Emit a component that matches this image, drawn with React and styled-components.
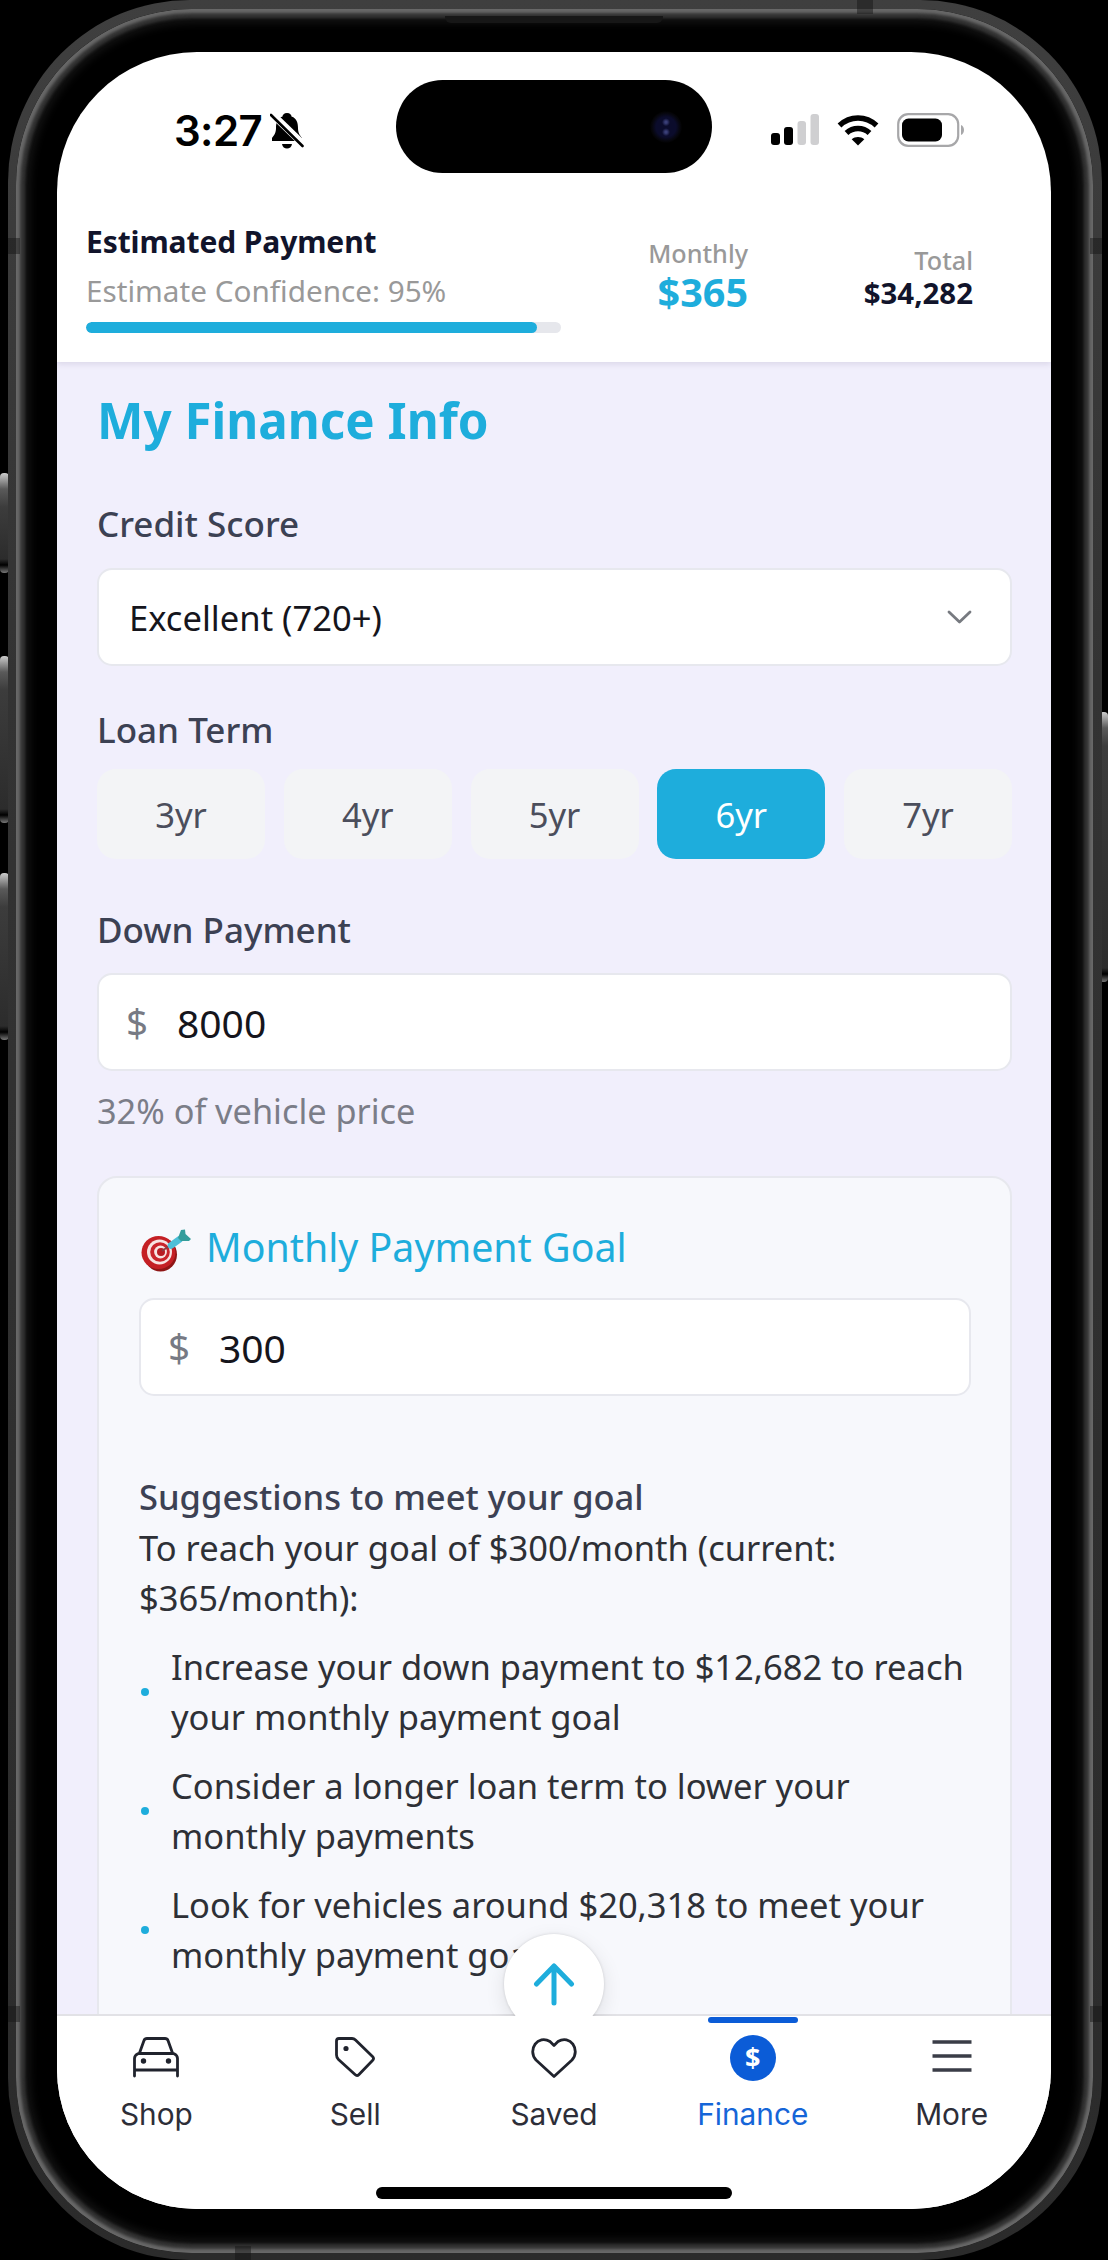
import React from "react";
import styled, { createGlobalStyle, css } from "styled-components";

const Global = createGlobalStyle`
  * { box-sizing: border-box; }
  body { margin: 0; background: #000; }
  h1, h2, h3, p, ul { margin: 0; padding: 0; font-weight: inherit; font-size: inherit; }
  button, input { font: inherit; border: 0; padding: 0; margin: 0; background: none; color: inherit; }
`;

const Stage = styled.main`
  position: relative;
  width: 1108px;
  height: 2260px;
  padding: 0 6px 0 8px;
  background: #000;
  overflow: hidden;
  font-family: "Noto Sans", sans-serif;
`;

const SideButton = styled.i`
  position: absolute;
  ${(p) => (p.$right ? "right: 0;" : "left: 0;")}
  top: ${(p) => p.$top}px;
  width: 9px;
  height: ${(p) => p.$height}px;
  border-radius: 4px;
  background: linear-gradient(#ccc 0, #5a5a5a 16px, #3c3c3c 34px, #2c2c2c calc(100% - 14px), #000 calc(100% - 8px), #777 100%);
`;

const Frame = styled.div`
  position: relative;
  height: 2260px;
  padding: 9px 9px 7px 8px;
  border-radius: 182px;
  background: linear-gradient(#3f3f3f, #333 30%, #2b2b2b);
`;

const Rim = styled.div`
  height: 2244px;
  padding: 43px 42px 43px 41px;
  border-radius: 176px;
  background: #000;
  box-shadow: inset 0 0 3px 4px #686868, inset 0 0 3px 9px #333, inset 0 0 8px 14px #141414;
`;

const Earpiece = styled.i`
  position: absolute;
  top: 16px;
  left: 437px;
  width: 218px;
  height: 7px;
  border-radius: 0 0 6px 6px;
  background: #171717;
`;

const AntennaBand = styled.i`
  position: absolute;
  background: rgba(20, 20, 20, 0.45);
  ${(p) => p.$edge}: 0;
  ${(p) => (p.$edge === "left" || p.$edge === "right"
    ? css`top: ${p.$at}px; width: 12px; height: 16px;`
    : css`left: ${p.$at}px; width: 16px; height: 14px;`)}
`;

const Screen = styled.div`
  height: 2157px;
  border-radius: 140px;
  overflow: hidden;
  display: flex;
  flex-direction: column;
  background: #fff;
`;

const StatusBar = styled.div`
  height: 160px;
  flex: none;
  display: flex;
  align-items: flex-start;
  padding: 28px 86px 0 117px;
`;

const Clock = styled.div`
  width: 222px;
  flex: none;
  display: flex;
  align-items: center;
  gap: 8px;
  padding-top: 27px;
  font: 600 42px/48px Inter, sans-serif;
  letter-spacing: -0.6px;
  color: #000;
`;

const Island = styled.div`
  width: 316px;
  height: 93px;
  border-radius: 47px;
  background: #000;
  display: flex;
  align-items: center;
  justify-content: flex-end;
  padding-right: 30px;
`;

const Lens = styled.i`
  width: 32px;
  height: 32px;
  border-radius: 50%;
  background: radial-gradient(circle at 50% 35%, #3a3f78 0 1px, transparent 4px),
    radial-gradient(circle at 50% 66%, #3a3f78 0 1px, transparent 4px),
    radial-gradient(circle, #0b0c2c 0 10px, #06060c 14px, #020202 16px);
`;

const Signals = styled.div`
  margin-left: auto;
  display: flex;
  align-items: center;
  gap: 18px;
  padding-top: 33px;
  svg { display: block; }
`;

const Summary = styled.header`
  height: 150px;
  flex: none;
  display: flex;
  padding: 12px 78px 0 29px;
  background: #fff;
  box-shadow: 0 2px 6px rgba(60, 50, 90, 0.13);
  clip-path: inset(0 0 -12px 0);
  position: relative;
`;

const Estimate = styled.div`
  width: 475px;
`;

const EstimateTitle = styled.h2`
  font-size: 30px;
  line-height: 36px;
  font-weight: 700;
  letter-spacing: -0.1px;
  color: #11142b;
`;

const Confidence = styled.p`
  margin-top: 13px;
  font-size: 29.7px;
  line-height: 36px;
  color: #999;
`;

const Track = styled.div`
  margin-top: 13px;
  height: 11px;
  border-radius: 6px;
  background: #e6e7ec;
  overflow: hidden;
`;

const Fill = styled.div`
  width: ${(p) => p.$percent}%;
  height: 100%;
  border-radius: 6px;
  background: #1eaddc;
`;

const Figure = styled.div`
  width: ${(p) => p.$width}px;
  padding-top: ${(p) => p.$top}px;
  display: flex;
  flex-direction: column;
  align-items: flex-end;
`;

const FigureLabel = styled.span`
  font-size: 25.2px;
  line-height: 32px;
  font-weight: 500;
  color: #999;
`;

const FigureValue = styled.span`
  font-weight: 700;
  ${(p) => p.$accent
    ? css`font-size: 39.500px; line-height: 46px; color: #1eaddc;`
    : css`font-size: 29.400px; line-height: 34px; color: #11142b;`}
`;

const Content = styled.section`
  flex: 1;
  min-height: 0;
  overflow: hidden;
  display: flex;
  flex-direction: column;
  padding: 26px 39px 0 40px;
  background: #f1effc;
`;

const PageTitle = styled.h1`
  font-size: 49.3px;
  line-height: 64px;
  font-weight: 700;
  color: #1eaddc;
`;

const Label = styled.h3`
  margin-top: ${(p) => p.$top}px;
  font-size: ${(p) => p.$size || 35}px;
  line-height: 44px;
  font-weight: 500;
  color: #3c4153;
`;

const Box = styled.div`
  margin-top: ${(p) => p.$top}px;
  height: 98px;
  flex: none;
  display: flex;
  align-items: center;
  justify-content: space-between;
  padding: 0 38px 0 ${(p) => p.$inset || 30}px;
  border: 2px solid #e7e8ee;
  border-radius: 15px;
  background: #fff;
  font-size: 34.6px;
  color: #15151c;
`;

const Prefix = styled.span`
  width: 51px;
  font-size: 38.5px;
  color: #777a84;
`;

const MoneyInput = styled.input`
  flex: 1;
  min-width: 0;
  font-size: 39px;
  outline: 0;
`;

const Terms = styled.div`
  margin-top: 17px;
  display: grid;
  grid-template-columns: repeat(5, 168px);
  justify-content: space-between;
`;

const Term = styled.button`
  height: 90px;
  border-radius: 19px;
  font-size: 34.6px;
  background: ${(p) => (p.$active ? "#1eaddc" : "#f3f4f6")};
  color: ${(p) => (p.$active ? "#fff" : "#4b4e5c")};
`;

const Hint = styled.p`
  margin-top: 18px;
  font-size: 34.3px;
  line-height: 44px;
  color: #7b7d88;
`;

const Goal = styled.section`
  margin-top: 43px;
  flex: none;
  height: 860px;
  padding: 43px 39px 0 40px;
  border: 2px solid #e7e8ee;
  border-radius: 20px;
  background: #f7f8fc;
`;

const GoalTitle = styled.h2`
  display: flex;
  align-items: center;
  gap: 14px;
  padding-left: 2px;
  font-size: 39.3px;
  line-height: 52px;
  color: #1eaddc;
  svg { display: block; position: relative; top: 4px; }
`;

const Suggestions = styled.div`
  margin-top: 4px;
  font-size: 34.5px;
  line-height: 50px;
  color: #2e3036;
`;

const List = styled.ul`
  list-style: none;
  margin-top: 19px;
  display: flex;
  flex-direction: column;
  gap: 19px;
`;

const Item = styled.li`
  display: flex;
  align-items: center;
  gap: 22px;
  &::before {
    content: "";
    flex: none;
    width: 8px;
    height: 8px;
    margin-left: 2px;
    border-radius: 50%;
    background: #1eaddc;
  }
  p { white-space: nowrap; }
`;

const TabBar = styled.nav`
  position: relative;
  height: 195px;
  flex: none;
  border-top: 2px solid #e2e2e6;
  background: #fff;
  display: flex;
  flex-direction: column;
  align-items: center;
`;

const Tabs = styled.div`
  width: 994px;
  height: 171px;
  display: grid;
  grid-template-columns: repeat(5, 1fr);
`;

const Tab = styled.div`
  display: flex;
  flex-direction: column;
  align-items: center;
  font: 400 29.8px/36px Inter, sans-serif;
  color: ${(p) => (p.$active ? "#1565d8" : "#2d2e38")};
  &::before {
    content: "";
    width: 90px;
    height: 6px;
    margin-top: 1px;
    border-radius: 3px;
    background: ${(p) => (p.$active ? "#0b5cd7" : "transparent")};
  }
  svg { display: block; margin: 12px 0 15px; }
`;

const HomeIndicator = styled.div`
  width: 356px;
  height: 12px;
  border-radius: 6px;
  background: #000;
`;

const ScrollTop = styled.button`
  position: absolute;
  left: 447px;
  bottom: 193px;
  width: 100px;
  height: 82px;
  clip-path: inset(-40px -40px 0 -40px);
`;

const Disc = styled.span`
  display: flex;
  align-items: center;
  justify-content: center;
  width: 100px;
  height: 100px;
  border-radius: 50%;
  background: #fff;
  box-shadow: 0 6px 20px rgba(0, 0, 0, 0.1), 0 0 3px rgba(0, 0, 0, 0.14);
`;

const Bell = () => (
  <svg width="34" height="38" viewBox="0 0 34 38">
    <path d="M17 1C20 1 21.500 3 21.500 4.500C27 6.500 28 11 28 16C28 21 30 23.500 32 26V29H2V26C4 23.500 6 21 6 16C6 11 7 6.500 12.500 4.500C12.500 3 14 1 17 1Z" fill="#000" />
    <path d="M12 32H22C21.500 35 19.500 36.500 17 36.500S12.500 35 12 32Z" fill="#000" />
    <path d="M0 0L34 33" stroke="#fff" strokeWidth="7" />
    <path d="M1 3L32.500 34" stroke="#000" strokeWidth="2.600" strokeLinecap="round" />
  </svg>
);

const Bars = () => (
  <svg width="48" height="32" viewBox="0 0 48 32">
    <rect x="0" y="19" width="9" height="12" rx="3" />
    <rect x="13" y="13" width="9" height="18" rx="3" />
    <rect x="26.500" y="7" width="8.500" height="24" rx="3" fill="#cfcfd1" />
    <rect x="39.500" y="0" width="8.500" height="31" rx="3" fill="#cfcfd1" />
  </svg>
);

const Wifi = () => (
  <svg width="42" height="32" viewBox="0 0 42 32" fill="none" stroke="#000" strokeWidth="5.500">
    <path d="M2.500 11.500C13 1.500 29 1.500 39.500 11.500" />
    <path d="M9.500 19C16 13 26 13 32.500 19" />
    <path d="M14.700 25.200C18 22.200 24 22.200 27.300 25.200L21 31.500Z" fill="#000" stroke="none" />
  </svg>
);

const Battery = () => (
  <svg width="68" height="34" viewBox="0 0 68 34">
    <rect x="1.200" y="1.200" width="60" height="31.600" rx="10" fill="#fff" stroke="#a7a7a9" strokeWidth="2.200" />
    <rect x="5" y="5.500" width="40" height="23" rx="6.500" />
    <path d="M64 12C68 13.500 68 20.500 64 22Z" fill="#a7a7a9" />
  </svg>
);

const Chevron = () => (
  <svg width="25" height="15" viewBox="0 0 25 15" fill="none" stroke="#777a80" strokeWidth="2.800" strokeLinecap="round" strokeLinejoin="round">
    <path d="M2 2L12.500 12L23 2" />
  </svg>
);

const Target = () => (
  <svg width="51" height="44" viewBox="0 0 51 44">
    <ellipse cx="19.500" cy="25.500" rx="16.500" ry="17" fill="#8f1515" />
    <ellipse cx="17.500" cy="23.500" rx="17" ry="16.500" fill="#c41f24" />
    <circle cx="18.500" cy="23" r="12.500" fill="#f7e4e2" />
    <circle cx="19" cy="23" r="9.800" fill="#c9252b" />
    <circle cx="19.500" cy="23" r="6.400" fill="#f7e4e2" />
    <circle cx="20" cy="23" r="4" fill="#b81d23" />
    <path d="M21 22L31 15" stroke="#8a3d44" strokeWidth="1.800" />
    <path d="M30 16.500L39 10" stroke="#4dbfd8" strokeWidth="6.500" strokeLinecap="round" />
    <path d="M37 9L40 1L44 0.500L44.500 5L50 10L48 12L40 12Z" fill="#339d9b" />
  </svg>
);

const ArrowUp = () => (
  <svg width="42" height="44" viewBox="0 0 42 44" fill="none" stroke="#1eaddc" strokeWidth="5" strokeLinecap="round" strokeLinejoin="round">
    <path d="M21 41V4M3.500 22L21 4L38.500 22" />
  </svg>
);

const line = { fill: "none", stroke: "#20232d", strokeWidth: 2.8, strokeLinecap: "round", strokeLinejoin: "round" };

const Car = () => (
  <svg width="48" height="46" viewBox="0 0 48 46" {...line}>
    <path d="M2.500 41V23.500Q2.500 20.500 5.500 19L7.500 18L12 5.500Q12.800 3.500 15 3.500H33Q35.200 3.500 36 5.500L40.500 18L42.500 19Q45.500 20.500 45.500 23.500V41M7.500 18.500H40.500M2.500 35H45.500" />
    <circle cx="11.500" cy="26" r="1.300" fill="#20232d" />
    <circle cx="36.500" cy="26" r="1.300" fill="#20232d" />
  </svg>
);

const Tag = () => (
  <svg width="42" height="46" viewBox="0 0 42 46" {...line}>
    <path d="M5 3.500H18Q20 3.500 21.500 5L38.500 21.500Q40.500 23.500 38.500 25.500L25 39.500Q23 41.500 21 39.500L4.500 24.500Q2.500 22.500 2.500 20V6Q2.500 3.500 5 3.500Z" />
    <circle cx="12" cy="13.500" r="1.200" fill="#20232d" />
  </svg>
);

const Heart = () => (
  <svg width="48" height="46" viewBox="0 0 48 46" {...line}>
    <path d="M24 41.500L6 25C-3 15 8-1 20 6.500L24 10.500L28 6.500C40-1 51 15 42 25Z" />
  </svg>
);

const Coin = styled.span`
  width: 46px;
  height: 46px;
  margin: 12px 0 15px;
  border-radius: 50%;
  display: grid;
  place-items: center;
  background: #0b5cd7;
  color: #fff;
  font: 700 27px/46px "Noto Sans", sans-serif;
`;

const Menu = () => (
  <svg width="40" height="46" viewBox="0 0 40 46" stroke="#3a3d47" strokeWidth="3.600">
    <path d="M0.500 7H39.500M0.500 21H39.500M0.500 35H39.500" />
  </svg>
);

const tabs = [
  { name: "Shop", icon: <Car /> },
  { name: "Sell", icon: <Tag /> },
  { name: "Saved", icon: <Heart /> },
  { name: "Finance", icon: <Coin>$</Coin>, active: true },
  { name: "More", icon: <Menu /> },
];

const suggestions = [
  ["Increase your down payment to $12,682 to reach", "your monthly payment goal"],
  ["Consider a longer loan term to lower your", "monthly payments"],
  ["Look for vehicles around $20,318 to meet your", "monthly payment goal"],
];

export default function App() {
  return (
    <Stage>
      <Global />
      <SideButton $top={473} $height={100} />
      <SideButton $top={656} $height={167} />
      <SideButton $top={873} $height={167} />
      <SideButton $right $top={712} $height={270} />
      <Frame>
        <Rim>
          <Screen>
            <StatusBar>
              <Clock>3:27<Bell /></Clock>
              <Island><Lens /></Island>
              <Signals><Bars /><Wifi /><Battery /></Signals>
            </StatusBar>
            <Summary>
              <Estimate>
                <EstimateTitle>Estimated Payment</EstimateTitle>
                <Confidence>Estimate Confidence: 95%</Confidence>
                <Track><Fill $percent={95} /></Track>
              </Estimate>
              <Figure $width={187} $top={13}>
                <FigureLabel>Monthly</FigureLabel>
                <FigureValue $accent>$365</FigureValue>
              </Figure>
              <Figure $width={225} $top={20}>
                <FigureLabel>Total</FigureLabel>
                <FigureValue>$34,282</FigureValue>
              </Figure>
            </Summary>
            <Content>
              <PageTitle>My Finance Info</PageTitle>
              <Label $top={50}>Credit Score</Label>
              <Box $top={22}>Excellent (720+)<Chevron /></Box>
              <Label $top={42}>Loan Term</Label>
              <Terms>
                {[3, 4, 5, 6, 7].map((y) => <Term key={y} $active={y === 6}>{y}yr</Term>)}
              </Terms>
              <Label $top={49}>Down Payment</Label>
              <Box $top={21} $inset={27}><Prefix>$</Prefix><MoneyInput defaultValue="8000" /></Box>
              <Hint>32% of vehicle price</Hint>
              <Goal>
                <GoalTitle><Target />Monthly Payment Goal</GoalTitle>
                <Box $top={25} $inset={27}><Prefix>$</Prefix><MoneyInput defaultValue="300" /></Box>
                <Label $top={79} $size={34.5}>Suggestions to meet your goal</Label>
                <Suggestions>
                  <p>To reach your goal of $300/month (current:<br />$365/month):</p>
                  <List>
                    {suggestions.map(([a, b]) => <Item key={a}><p>{a}<br />{b}</p></Item>)}
                  </List>
                </Suggestions>
              </Goal>
            </Content>
            <TabBar>
              <ScrollTop><Disc><ArrowUp /></Disc></ScrollTop>
              <Tabs>
                {tabs.map((t) => <Tab key={t.name} $active={t.active}>{t.icon}{t.name}</Tab>)}
              </Tabs>
              <HomeIndicator />
            </TabBar>
          </Screen>
        </Rim>
        <Earpiece />
        <AntennaBand $edge="top" $at={849} />
        <AntennaBand $edge="bottom" $at={227} />
        <AntennaBand $edge="left" $at={238} />
        <AntennaBand $edge="right" $at={238} />
        <AntennaBand $edge="left" $at={2006} />
        <AntennaBand $edge="right" $at={2006} />
      </Frame>
    </Stage>
  );
}
